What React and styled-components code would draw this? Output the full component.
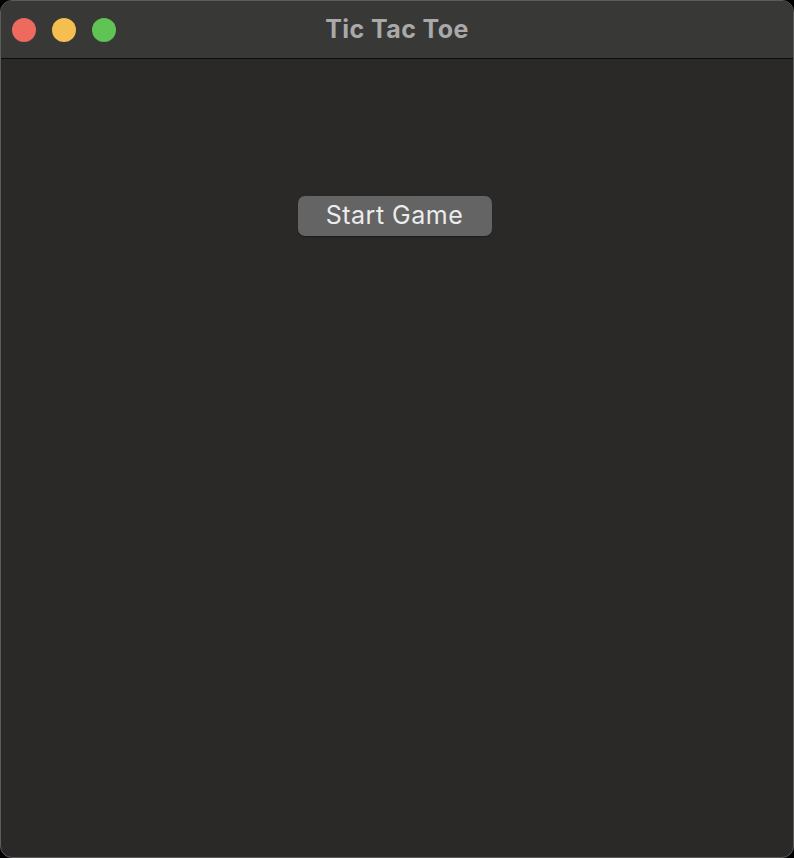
import React from "react";
import styled, { createGlobalStyle } from "styled-components";

const GlobalStyle = createGlobalStyle`
  html, body {
    margin: 0;
    padding: 0;
    background: #000;
    height: 100%;
  }
  #root {
    height: 100%;
  }
`;

const Window = styled.div`
  box-sizing: border-box;
  width: 794px;
  height: 858px;
  display: flex;
  flex-direction: column;
  border: 1px solid #5c5c5c;
  border-radius: 12px;
  overflow: hidden;
  background: #2a2928;
  font-family: Inter, "Liberation Sans", sans-serif;
`;

const TitleBar = styled.div`
  position: relative;
  height: 57px;
  flex-shrink: 0;
  display: flex;
  align-items: center;
  justify-content: center;
  background: #383837;
  border-bottom: 1px solid #0c0c0c;
`;

const Lights = styled.div`
  position: absolute;
  left: 11px;
  top: 17px;
  display: flex;
  gap: 16px;
`;

const Light = styled.span`
  width: 24px;
  height: 24px;
  border-radius: 50%;
  background: ${(p) => p.color};
`;

const Title = styled.h1`
  margin: 0 0 2px;
  font-size: 25px;
  font-weight: 700;
  color: #a9a9a9;
  letter-spacing: 0.4px;
`;

const Content = styled.main`
  flex: 1;
  display: flex;
  flex-direction: column;
  align-items: center;
  padding-top: 137px;
`;

const Button = styled.button`
  box-sizing: border-box;
  width: 194px;
  height: 40px;
  margin-left: -5px;
  padding: 0 0 2px;
  border: none;
  border-radius: 7px;
  background: #646464;
  color: #ececec;
  font-family: Inter, "Liberation Sans", sans-serif;
  font-size: 25px;
  font-weight: 400;
  letter-spacing: 0.5px;
  box-shadow: 0 1px 1px rgba(0, 0, 0, 0.35);
  cursor: pointer;
`;

const App = () => {
  return (
    <>
      <GlobalStyle />
      <Window>
        <TitleBar>
          <Lights>
            <Light color="#ee6a5f" />
            <Light color="#f5bf4f" />
            <Light color="#5fc454" />
          </Lights>
          <Title>Tic Tac Toe</Title>
        </TitleBar>
        <Content>
          <Button>Start Game</Button>
        </Content>
      </Window>
    </>
  );
};

export default App;
